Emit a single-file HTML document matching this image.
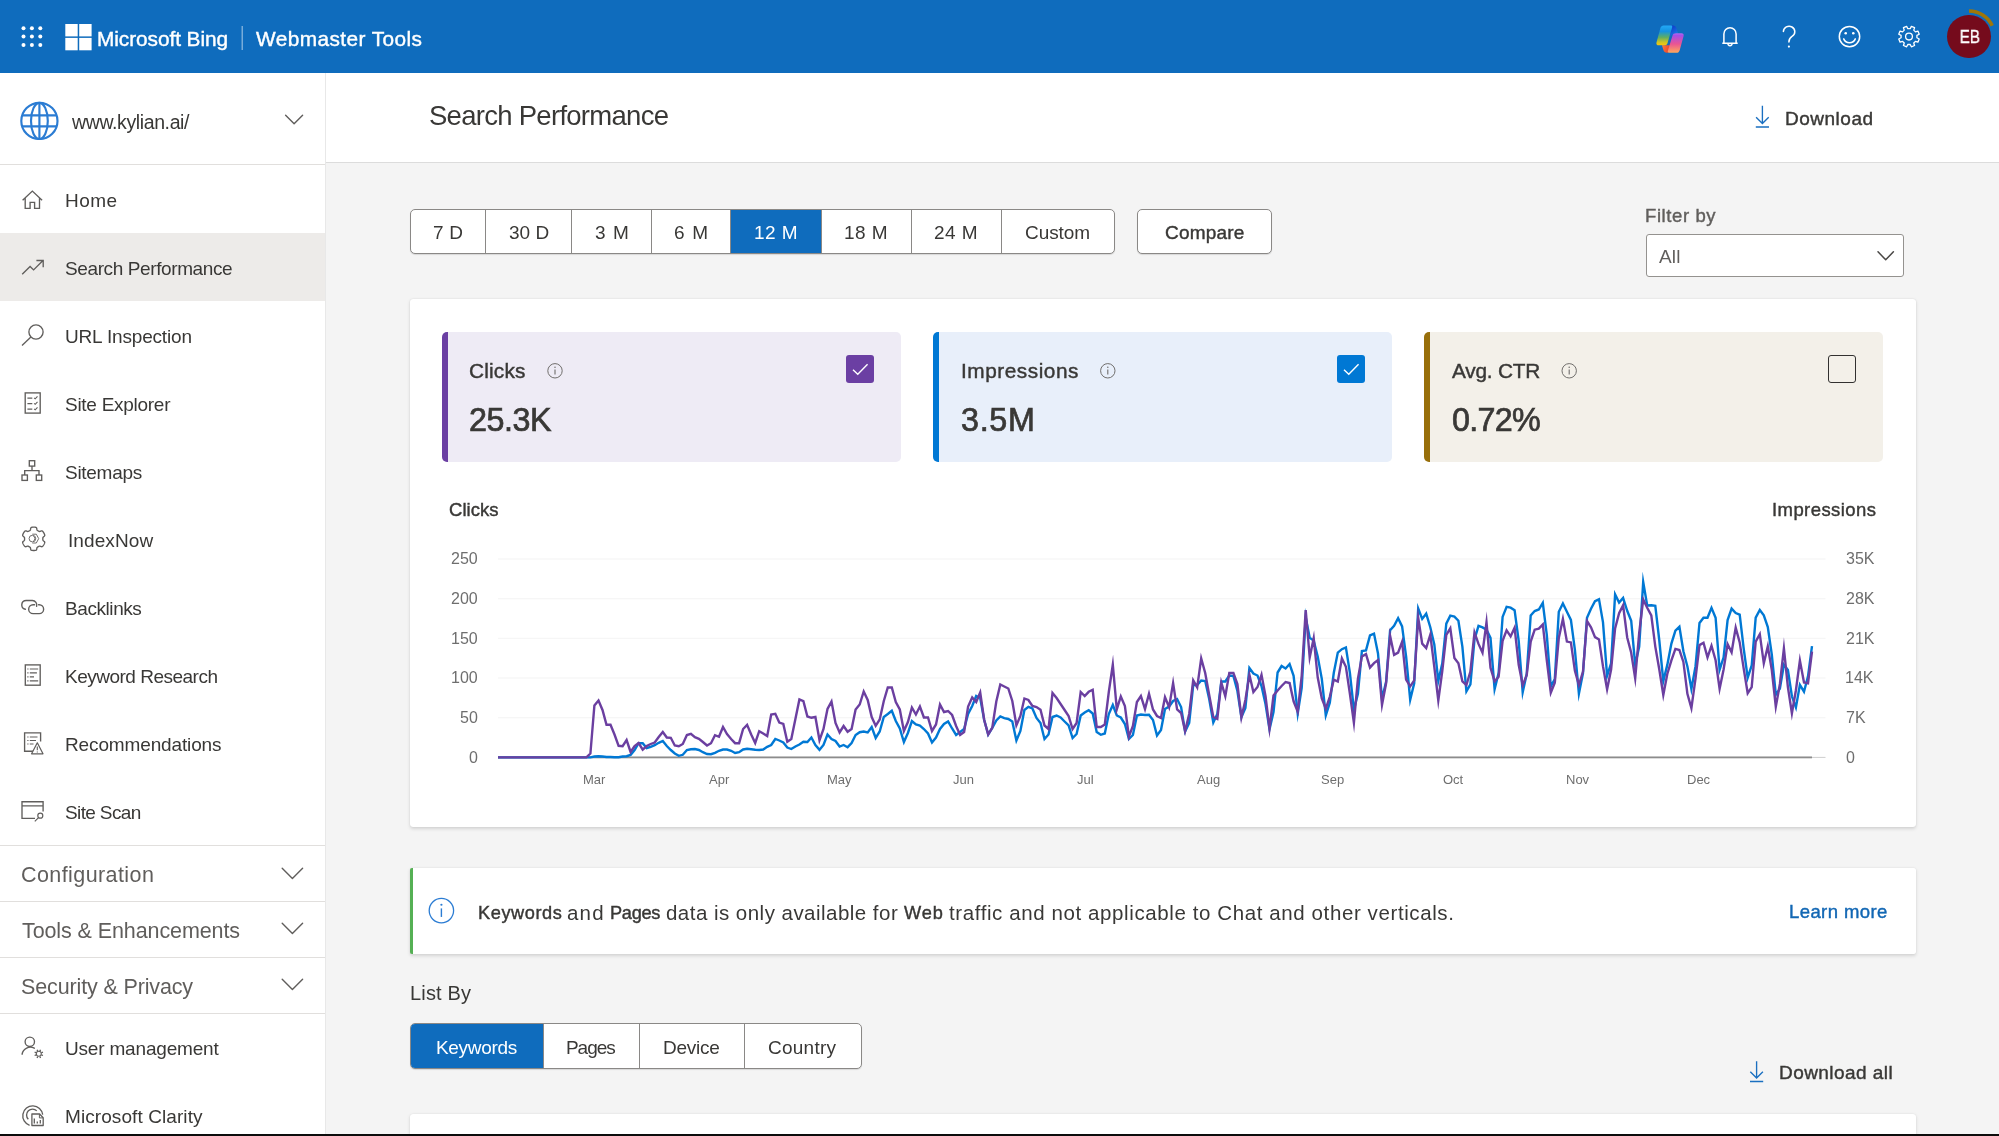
<!DOCTYPE html>
<html lang="en"><head><meta charset="utf-8"><title>Search Performance - Bing Webmaster Tools</title>
<style>
*{box-sizing:border-box;margin:0;padding:0}
html,body{width:1999px;height:1136px;overflow:hidden;background:#f4f4f4}
body{font-family:"Liberation Sans",sans-serif;position:relative;color:#323130}
.t{position:absolute;white-space:nowrap;display:block;will-change:transform}
.sb{-webkit-text-stroke:0.42px currentColor}
.sbM{-webkit-text-stroke:0.7px currentColor}
.sbL{-webkit-text-stroke:0.75px currentColor}
.abs{position:absolute}
header{position:absolute;left:0;top:0;width:1999px;height:73px;background:#0f6cbd}
aside{position:absolute;left:0;top:73px;width:326px;height:1063px;background:#fff;border-right:1px solid #e8e8e8}
.hr{position:absolute;left:0;width:325px;height:1px;background:#e1dfdd}
.titlebar{position:absolute;left:326px;top:73px;width:1673px;height:90px;background:#fff;border-bottom:1px solid #dcdcdc}
.card{position:absolute;background:#fff;border-radius:3px;box-shadow:0 1.6px 3.6px rgba(0,0,0,.13),0 0 1.2px rgba(0,0,0,.12)}
.seg{position:absolute;background:#fff;border:1px solid #8a8886;border-radius:5px;box-shadow:0 1px 1px rgba(0,0,0,.12)}
.seg i{position:absolute;top:0;width:1px;height:100%;background:#8a8886}
.seg b{position:absolute;top:0;height:100%;background:#0f6cbd}
.tile{position:absolute;top:332px;width:459px;height:130px;border-radius:5px;border-left:6px solid}
.cb{position:absolute;top:355px;width:28px;height:28px;border-radius:3px}
svg{position:absolute;overflow:visible}
</style></head><body>

<header>
<svg width="1999" height="73" style="left:0;top:0"><g fill="#fff"><circle cx="23.5" cy="28.2" r="2"/><circle cx="23.5" cy="36.6" r="2"/><circle cx="23.5" cy="45.0" r="2"/><circle cx="31.9" cy="28.2" r="2"/><circle cx="31.9" cy="36.6" r="2"/><circle cx="31.9" cy="45.0" r="2"/><circle cx="40.3" cy="28.2" r="2"/><circle cx="40.3" cy="36.6" r="2"/><circle cx="40.3" cy="45.0" r="2"/></g>
<g fill="#fff"><rect x="65.3" y="24" width="12.4" height="12.4"/><rect x="79.2" y="24" width="12.4" height="12.4"/><rect x="65.3" y="37.9" width="12.4" height="12.4"/><rect x="79.2" y="37.9" width="12.4" height="12.4"/></g>
<rect x="241.6" y="26" width="1.2" height="24" fill="#fff" opacity=".55"/>
<defs>
<linearGradient id="cpA" x1="0" y1="0" x2="0.6" y2="1"><stop offset="0" stop-color="#0a34c4"/><stop offset=".55" stop-color="#1557d6"/><stop offset="1" stop-color="#1a78e6"/></linearGradient>
<linearGradient id="cpB" x1="0" y1="0" x2="0" y2="1"><stop offset="0" stop-color="#23a9f7"/><stop offset=".3" stop-color="#1593e0"/><stop offset=".6" stop-color="#5fae62"/><stop offset=".85" stop-color="#cfc423"/><stop offset="1" stop-color="#f7c709"/></linearGradient>
<linearGradient id="cpC" x1="0" y1="0" x2="0" y2="1"><stop offset="0" stop-color="#b267f0"/><stop offset=".12" stop-color="#a84ee6"/><stop offset=".55" stop-color="#ea5592"/><stop offset="1" stop-color="#ffa95a"/></linearGradient>
<linearGradient id="cpD" x1="0" y1="0" x2="1" y2="0.3"><stop offset="0" stop-color="#ff7a3c"/><stop offset="1" stop-color="#e8432c"/></linearGradient>
</defs><path d="M1670.500 25.400 H1673.200 c1.600 0 2.700 .900 3.200 2.500 L1678.100 33.400 H1674.500 L1669.600 36 L1672.200 27.100z" fill="url(#cpA)"/><path d="M1661.900 45.200 H1670.600 L1668.300 52.800 H1666.700 c-1.600 0 -2.700 -.900 -3.200 -2.500z" fill="url(#cpD)"/><path d="M1663.6 25.400 H1671 c1 0 1.500 .700 1.200 1.700 L1667.400 43.600 c-.400 1.100 -1.200 1.700 -2.400 1.700 H1658.600 c-1.700 0 -2.600 -1.300 -2.100 -2.900 L1660.400 28 c.500 -1.700 1.600 -2.600 3.200 -2.600z" fill="url(#cpB)"/><path d="M1676 33.200 H1681.500 c1.700 0 2.600 1.300 2.100 2.900 L1679.700 50.200 c-.500 1.700 -1.600 2.600 -3.200 2.600 H1669 c-1 0 -1.500 -.700 -1.200 -1.700 L1672.600 35.200 c.400 -1.300 1.500 -2 3.400 -2z" fill="url(#cpC)"/><path d="M1722.3 43.300 H1737.700 M1723.900 43.300 V34 a6.100 6.400 0 0 1 12.200 0 V43.300" fill="none" stroke="#fff" stroke-width="1.5" stroke-linejoin="round"/><path d="M1727.900 43.600 a2.100 2.100 0 0 0 4.200 0" fill="none" stroke="#fff" stroke-width="1.4"/><path d="M1783.400 31.500 a5.700 5.400 0 1 1 8.600 4.800 c-2.200 1.500 -3.100 2.600 -3.100 5.600" fill="none" stroke="#fff" stroke-width="1.5" stroke-linecap="round"/><circle cx="1788.900" cy="46.600" r="1.100" fill="#fff"/><circle cx="1849.500" cy="36.600" r="10.200" fill="none" stroke="#fff" stroke-width="1.500"/><circle cx="1845.700" cy="33.300" r="1.300" fill="#fff"/><circle cx="1853.300" cy="33.300" r="1.300" fill="#fff"/><path d="M1843.700 38.900 a6.300 6.300 0 0 0 11.600 0" fill="none" stroke="#fff" stroke-width="1.500" stroke-linecap="round"/><path d="M1910.19 28.69 L1911.37 26.37 L1914.56 27.69 L1913.75 30.16 L1915.44 31.85 L1917.91 31.04 L1919.23 34.23 L1916.91 35.41 L1916.91 37.79 L1919.23 38.97 L1917.91 42.16 L1915.44 41.35 L1913.75 43.04 L1914.56 45.51 L1911.37 46.83 L1910.19 44.51 L1907.81 44.51 L1906.63 46.83 L1903.44 45.51 L1904.25 43.04 L1902.56 41.35 L1900.09 42.16 L1898.77 38.97 L1901.09 37.79 L1901.09 35.41 L1898.77 34.23 L1900.09 31.04 L1902.56 31.85 L1904.25 30.16 L1903.44 27.69 L1906.63 26.37 L1907.81 28.69Z" fill="none" stroke="#fff" stroke-width="1.300" stroke-linejoin="round"/><circle cx="1909" cy="36.600" r="3.400" fill="none" stroke="#fff" stroke-width="1.300"/><path d="M1969.00 11.00 A25.6 25.6 0 0 1 1992.20 25.78" fill="none" stroke="#9f7609" stroke-width="3.600"/>
</svg>
<span class="t sb" style="left:97.49px;top:25.29px;font-size:20.8px;line-height:27px;color:#fff;letter-spacing:-0.056px;">Microsoft Bing</span>
<span class="t sb" style="left:255.51px;top:25.29px;font-size:20.8px;line-height:27px;color:#fff;letter-spacing:0.437px;">Webmaster Tools</span>
<div class="abs" style="left:1947.2px;top:14.9px;width:43.4px;height:43.4px;border-radius:50%;background:#750b1c"></div>
<span class="t sb" style="left:1957.53px;top:26.33px;font-size:17.8px;line-height:23px;color:#fff;transform:scaleX(0.86);transform-origin:50% 50%;">EB</span>
</header>
<aside></aside>
<div class="abs" style="left:0;top:233px;width:325px;height:68px;background:#edebe9"></div>
<nav>
<span class="t" style="left:72.23px;top:109.94px;font-size:19.5px;line-height:25px;color:#393836;letter-spacing:-0.383px;">www.kylian.ai/</span>
<span class="t" style="left:64.94px;top:187.62px;font-size:19px;line-height:25px;color:#393836;letter-spacing:0.473px;">Home</span>
<span class="t" style="left:64.94px;top:255.62px;font-size:19px;line-height:25px;color:#393836;letter-spacing:-0.391px;">Search Performance</span>
<span class="t" style="left:64.73px;top:323.62px;font-size:19px;line-height:25px;color:#393836;letter-spacing:-0.169px;">URL Inspection</span>
<span class="t" style="left:64.74px;top:391.62px;font-size:19px;line-height:25px;color:#393836;letter-spacing:-0.274px;">Site Explorer</span>
<span class="t" style="left:64.74px;top:459.62px;font-size:19px;line-height:25px;color:#393836;letter-spacing:-0.279px;">Sitemaps</span>
<span class="t" style="left:67.65px;top:527.62px;font-size:19px;line-height:25px;color:#393836;letter-spacing:0.088px;">IndexNow</span>
<span class="t" style="left:65.14px;top:595.62px;font-size:19px;line-height:25px;color:#393836;letter-spacing:-0.426px;">Backlinks</span>
<span class="t" style="left:65.14px;top:663.62px;font-size:19px;line-height:25px;color:#393836;letter-spacing:-0.502px;">Keyword Research</span>
<span class="t" style="left:65.14px;top:731.62px;font-size:19px;line-height:25px;color:#393836;letter-spacing:-0.133px;">Recommendations</span>
<span class="t" style="left:65.24px;top:799.62px;font-size:19px;line-height:25px;color:#393836;letter-spacing:-0.629px;">Site Scan</span>
<span class="t" style="left:65.23px;top:1035.72px;font-size:19px;line-height:25px;color:#393836;letter-spacing:-0.185px;">User management</span>
<span class="t" style="left:65.14px;top:1103.92px;font-size:19px;line-height:25px;color:#393836;letter-spacing:0.082px;">Microsoft Clarity</span>
<span class="t" style="left:21.31px;top:861.15px;font-size:21.5px;line-height:28px;color:#605e5c;letter-spacing:0.417px;">Configuration</span>
<span class="t" style="left:21.72px;top:917.15px;font-size:21.5px;line-height:28px;color:#605e5c;letter-spacing:-0.097px;">Tools &amp; Enhancements</span>
<span class="t" style="left:21.22px;top:973.05px;font-size:21.5px;line-height:28px;color:#605e5c;letter-spacing:-0.136px;">Security &amp; Privacy</span>
<div class="hr" style="top:164px"></div>
<div class="hr" style="top:845px"></div>
<div class="hr" style="top:901px"></div>
<div class="hr" style="top:957px"></div>
<div class="hr" style="top:1013px"></div>
<svg width="326" height="1136" style="left:0;top:0"><g fill="none" stroke="#2b7cd3" stroke-width="2.150"><circle cx="39.400" cy="120.900" r="18.100"/><ellipse cx="39.400" cy="120.900" rx="8.400" ry="18.100"/><path d="M39.400 102.800 V139 M22.200 115.400 H56.600 M22.200 126.400 H56.600"/></g><path d="M285.6 115.2 L294.1 123.8 L302.6 115.2" fill="none" stroke="#605e5c" stroke-width="1.4" stroke-linecap="round" stroke-linejoin="round"/><path d="M22.600 200.300 L32.350 191.100 L42.100 200.300 M25.200 198.300 V208.300 H30.100 V202.300 H34.600 V208.300 H39.500 V198.300" fill="none" stroke="#605e5c" stroke-width="1.350" stroke-linejoin="miter"/><path d="M22.200 274.300 L30.100 266.400 L33.600 269.900 L43 260.500 M36.400 260.500 H43.200 V267.300" fill="none" stroke="#605e5c" stroke-width="1.350" stroke-linejoin="miter"/><circle cx="36" cy="332" r="7.100" fill="none" stroke="#605e5c" stroke-width="1.350" stroke-linejoin="miter"/><path d="M30.900 337.100 L22 345.400" fill="none" stroke="#605e5c" stroke-width="1.350" stroke-linejoin="miter"/><rect x="25.200" y="392.900" width="15" height="20.200" fill="none" stroke="#605e5c" stroke-width="1.350" stroke-linejoin="miter"/><path d="M27.400 398.1 H32.300 M34.100 397.8 l1.100 1 l2.300 -2.400" fill="none" stroke="#605e5c" stroke-width="1.100"/><path d="M27.400 403.6 H32.300 M34.100 403.3 l1.100 1 l2.300 -2.400" fill="none" stroke="#605e5c" stroke-width="1.100"/><path d="M27.400 409.1 H32.300 M34.100 408.8 l1.100 1 l2.300 -2.400" fill="none" stroke="#605e5c" stroke-width="1.100"/><rect x="29.300" y="460.700" width="5.400" height="5.400" fill="none" stroke="#605e5c" stroke-width="1.350" stroke-linejoin="miter"/><rect x="22" y="475" width="5.400" height="5.400" fill="none" stroke="#605e5c" stroke-width="1.350" stroke-linejoin="miter"/><rect x="36.300" y="475" width="5.400" height="5.400" fill="none" stroke="#605e5c" stroke-width="1.350" stroke-linejoin="miter"/><path d="M32 466.100 V470.600 M24.700 475 V470.600 H39 V475" fill="none" stroke="#605e5c" stroke-width="1.350" stroke-linejoin="miter"/><path d="M33.70 527.10 L34.11 527.11 L34.52 527.13 L34.92 527.17 L35.33 527.22 L35.73 527.31 L36.11 527.44 L36.46 527.72 L36.71 528.29 L36.84 529.13 L36.97 529.80 L37.18 530.18 L37.44 530.41 L37.71 530.58 L37.99 530.74 L38.26 530.89 L38.54 531.06 L38.82 531.22 L39.10 531.37 L39.42 531.48 L39.85 531.47 L40.51 531.24 L41.30 530.93 L41.92 530.86 L42.33 531.03 L42.64 531.30 L42.91 531.60 L43.16 531.93 L43.40 532.26 L43.62 532.60 L43.83 532.95 L44.03 533.31 L44.21 533.67 L44.38 534.04 L44.54 534.42 L44.67 534.81 L44.74 535.21 L44.68 535.65 L44.31 536.15 L43.65 536.69 L43.13 537.14 L42.90 537.51 L42.84 537.84 L42.83 538.16 L42.83 538.48 L42.83 538.80 L42.83 539.12 L42.83 539.44 L42.84 539.76 L42.90 540.09 L43.13 540.46 L43.65 540.91 L44.31 541.45 L44.68 541.95 L44.74 542.39 L44.67 542.79 L44.54 543.18 L44.38 543.56 L44.21 543.93 L44.03 544.29 L43.83 544.65 L43.62 545.00 L43.40 545.34 L43.16 545.67 L42.91 546.00 L42.64 546.30 L42.33 546.57 L41.92 546.74 L41.30 546.67 L40.51 546.36 L39.85 546.13 L39.42 546.12 L39.10 546.23 L38.82 546.38 L38.54 546.54 L38.26 546.71 L37.99 546.86 L37.71 547.02 L37.44 547.19 L37.18 547.42 L36.97 547.80 L36.84 548.47 L36.71 549.31 L36.46 549.88 L36.11 550.16 L35.73 550.29 L35.33 550.38 L34.92 550.43 L34.52 550.47 L34.11 550.49 L33.70 550.50 L33.29 550.49 L32.88 550.47 L32.48 550.43 L32.07 550.38 L31.67 550.29 L31.29 550.16 L30.94 549.88 L30.69 549.31 L30.56 548.47 L30.43 547.80 L30.22 547.42 L29.96 547.19 L29.69 547.02 L29.41 546.86 L29.14 546.71 L28.86 546.54 L28.58 546.38 L28.30 546.23 L27.98 546.12 L27.55 546.13 L26.89 546.36 L26.10 546.67 L25.48 546.74 L25.07 546.57 L24.76 546.30 L24.49 546.00 L24.24 545.67 L24.00 545.34 L23.78 545.00 L23.57 544.65 L23.37 544.29 L23.19 543.93 L23.02 543.56 L22.86 543.18 L22.73 542.79 L22.66 542.39 L22.72 541.95 L23.09 541.45 L23.75 540.91 L24.27 540.46 L24.50 540.09 L24.56 539.76 L24.57 539.44 L24.57 539.12 L24.57 538.80 L24.57 538.48 L24.57 538.16 L24.56 537.84 L24.50 537.51 L24.27 537.14 L23.75 536.69 L23.09 536.15 L22.72 535.65 L22.66 535.21 L22.73 534.81 L22.86 534.42 L23.02 534.04 L23.19 533.67 L23.37 533.31 L23.57 532.95 L23.78 532.60 L24.00 532.26 L24.24 531.93 L24.49 531.60 L24.76 531.30 L25.07 531.03 L25.48 530.86 L26.10 530.93 L26.89 531.24 L27.55 531.47 L27.98 531.48 L28.30 531.37 L28.58 531.22 L28.86 531.06 L29.14 530.89 L29.41 530.74 L29.69 530.58 L29.96 530.41 L30.22 530.18 L30.43 529.80 L30.56 529.13 L30.69 528.29 L30.94 527.72 L31.29 527.44 L31.67 527.31 L32.07 527.22 L32.48 527.17 L32.88 527.13 L33.29 527.11Z" fill="none" stroke="#605e5c" stroke-width="1.350" stroke-linejoin="round"/><circle cx="32.400" cy="538.600" r="3.300" fill="none" stroke="#605e5c" stroke-width=".9"/><path d="M32.300 534.200 H36.300 L38.700 538.600 L36.300 543 H32.300" fill="none" stroke="#605e5c" stroke-width=".9" stroke-linejoin="round"/><path d="M33.300 536.200 a2.600 2.600 0 0 1 0 4.800" fill="none" stroke="#605e5c" stroke-width=".9"/><path d="M25.300 609.300 A4.450 4.450 0 0 1 26.300 600.500 H32.300 A4.450 4.450 0 0 1 36.600 606.300" fill="none" stroke="#605e5c" stroke-width="1.400" stroke-linecap="round"/><path d="M38.600 604.700 H39.200 A4.450 4.450 0 0 1 39.200 613.600 H33.100 A4.450 4.450 0 0 1 33.100 604.700 H34.600" fill="none" stroke="#605e5c" stroke-width="1.400" stroke-linecap="round"/><rect x="25.300" y="664.900" width="14.900" height="20.300" fill="none" stroke="#605e5c" stroke-width="1.350" stroke-linejoin="miter"/><path d="M27.300 669 h1.200 M29.800 669 H38.2" fill="none" stroke="#605e5c" stroke-width="1.200"/><path d="M27.300 672.9 h1.200 M29.800 672.9 H36.9" fill="none" stroke="#605e5c" stroke-width="1.200"/><path d="M27.300 676.9 h1.200 M29.800 676.9 H34" fill="none" stroke="#605e5c" stroke-width="1.200"/><path d="M27.300 680.9 h1.200 M29.800 680.9 H38.2" fill="none" stroke="#605e5c" stroke-width="1.200"/><path d="M34 751.200 H24.600 V732.800 H40.600 V741.500" fill="none" stroke="#605e5c" stroke-width="1.350" stroke-linejoin="miter"/><path d="M27.300 737 h1.200 M29.800 737 H37.5" fill="none" stroke="#605e5c" stroke-width="1.100"/><path d="M27.300 740.5 h1.200 M29.800 740.5 H36" fill="none" stroke="#605e5c" stroke-width="1.100"/><path d="M27.300 744 h1.200 M29.800 744 H33.5" fill="none" stroke="#605e5c" stroke-width="1.100"/><path d="M37.300 742.800 L43 753.800 H31.600 Z" fill="#fff" stroke="#605e5c" stroke-width="1.200" stroke-linejoin="round"/><path d="M37.300 746.500 V750.300 M37.300 751.400 v1" stroke="#605e5c" stroke-width="1.100" fill="none"/><path d="M35 818.400 H22 V801.700 H43.100 V811.500 M22 805.900 H43.100" fill="none" stroke="#605e5c" stroke-width="1.350" stroke-linejoin="miter"/><circle cx="40.300" cy="815.700" r="2.500" fill="none" stroke="#605e5c" stroke-width="1.200"/><path d="M38.500 817.600 L34.800 821.300" stroke="#605e5c" stroke-width="1.200" fill="none"/><path d="M282.2 868.2 L292.4 878.4 L302.6 868.2" fill="none" stroke="#605e5c" stroke-width="1.4" stroke-linecap="round" stroke-linejoin="round"/><path d="M282.2 923.2 L292.4 933.4 L302.6 923.2" fill="none" stroke="#605e5c" stroke-width="1.4" stroke-linecap="round" stroke-linejoin="round"/><path d="M282.2 979.2 L292.4 989.4 L302.6 979.2" fill="none" stroke="#605e5c" stroke-width="1.4" stroke-linecap="round" stroke-linejoin="round"/><circle cx="29.800" cy="1041.800" r="4.700" fill="none" stroke="#605e5c" stroke-width="1.350" stroke-linejoin="miter"/><path d="M22.100 1054.200 A8.300 8.300 0 0 1 34.300 1048.200" fill="none" stroke="#605e5c" stroke-width="1.400" stroke-linecap="round"/><circle cx="38.800" cy="1053.800" r="2.500" fill="none" stroke="#605e5c" stroke-width="1.100"/><path d="M39.87 1051.21 L40.52 1049.64 M41.39 1052.73 L42.96 1052.08 M41.39 1054.87 L42.96 1055.52 M39.87 1056.39 L40.52 1057.96 M37.73 1056.39 L37.08 1057.96 M36.21 1054.87 L34.64 1055.52 M36.21 1052.73 L34.64 1052.08 M37.73 1051.21 L37.08 1049.64 " fill="none" stroke="#605e5c" stroke-width="1.300"/><path d="M29.600 1125.300 A10 10 0 1 1 42.700 1114.600" fill="none" stroke="#605e5c" stroke-width="1.350" stroke-linejoin="miter"/><path d="M28.300 1119.300 A5.900 5.900 0 0 1 36.800 1110.900" fill="none" stroke="#605e5c" stroke-width="1.350" stroke-linejoin="miter"/><path d="M31.900 1114 H39.600 L43.200 1117.700 V1125.500 H31.900 Z" fill="#fff" stroke="#605e5c" stroke-width="1.300" stroke-linejoin="round"/><path d="M39.400 1114.200 V1117.900 H43" fill="none" stroke="#605e5c" stroke-width="1"/><path d="M34.300 1123.600 v-5 M37.300 1123.600 v-2 M40.300 1123.600 v-3.500" stroke="#605e5c" stroke-width="1.300" fill="none"/></svg>
</nav>
<div class="titlebar"></div>
<span class="t" style="left:428.95px;top:97.77px;font-size:27.5px;line-height:36px;color:#393836;letter-spacing:-0.719px;">Search Performance</span>
<span class="t sb" style="left:1784.64px;top:105.72px;font-size:19px;line-height:25px;color:#393836;letter-spacing:0.512px;">Download</span>
<main>
<div class="seg" style="left:410px;top:208.5px;width:705px;height:45.5px"><b style="left:319.5px;width:90.5px"></b><i style="left:74.3px"></i><i style="left:160.3px"></i><i style="left:240.4px"></i><i style="left:319.4px"></i><i style="left:409.8px"></i><i style="left:500.0px"></i><i style="left:590.4px"></i></div>
<span class="t" style="left:432.93px;top:219.62px;font-size:19px;line-height:25px;color:#393836;letter-spacing:0.258px;">7 D</span>
<span class="t" style="left:508.78px;top:219.62px;font-size:19px;line-height:25px;color:#393836;">30 D</span>
<span class="t" style="left:594.98px;top:219.62px;font-size:19px;line-height:25px;color:#393836;letter-spacing:1.055px;">3 M</span>
<span class="t" style="left:673.64px;top:219.62px;font-size:19px;line-height:25px;color:#393836;letter-spacing:1.175px;">6 M</span>
<span class="t" style="left:754.15px;top:219.62px;font-size:19px;line-height:25px;color:#fff;letter-spacing:0.455px;">12 M</span>
<span class="t" style="left:844.25px;top:219.62px;font-size:19px;line-height:25px;color:#393836;letter-spacing:0.422px;">18 M</span>
<span class="t" style="left:934.14px;top:219.62px;font-size:19px;line-height:25px;color:#393836;letter-spacing:0.458px;">24 M</span>
<span class="t" style="left:1025.34px;top:219.62px;font-size:19px;line-height:25px;color:#393836;letter-spacing:-0.069px;">Custom</span>
<div class="seg" style="left:1137px;top:208.5px;width:135px;height:45.5px"></div>
<span class="t sb" style="left:1164.74px;top:219.62px;font-size:19px;line-height:25px;color:#393836;letter-spacing:0.211px;">Compare</span>
<span class="t sb" style="left:1645.48px;top:204.19px;font-size:18.5px;line-height:24px;color:#605e5c;letter-spacing:0.596px;">Filter by</span>
<div class="abs" style="left:1646px;top:234.2px;width:258px;height:42.6px;background:#fff;border:1px solid #94928f;border-radius:3px"></div>
<span class="t" style="left:1659.16px;top:244.12px;font-size:19px;line-height:25px;color:#605e5c;letter-spacing:0.196px;">All</span>
<div class="card" style="left:410px;top:299px;width:1506px;height:528px"></div>
<div class="tile" style="left:442px;border-color:#6b3fa3;background:#eeebf5"></div>
<div class="tile" style="left:933px;border-color:#0078d4;background:#e8effa"></div>
<div class="tile" style="left:1424px;border-color:#986f0b;background:#f3f0e9"></div>
<span class="t sb" style="left:469.14px;top:356.69px;font-size:20.8px;line-height:27px;color:#393836;letter-spacing:0.189px;">Clicks</span>
<span class="t sbM" style="left:468.98px;top:398.81px;font-size:32.3px;line-height:42px;color:#393836;letter-spacing:-0.456px;">25.3K</span>
<span class="t sb" style="left:960.88px;top:356.69px;font-size:20.8px;line-height:27px;color:#393836;letter-spacing:0.535px;">Impressions</span>
<span class="t sbM" style="left:961.27px;top:398.81px;font-size:32.3px;line-height:42px;color:#393836;letter-spacing:0.691px;">3.5M</span>
<span class="t sb" style="left:1452.26px;top:356.69px;font-size:20.8px;line-height:27px;color:#393836;letter-spacing:-0.224px;">Avg. CTR</span>
<span class="t sbM" style="left:1451.54px;top:398.81px;font-size:32.3px;line-height:42px;color:#393836;letter-spacing:-0.743px;">0.72%</span>
<div class="cb" style="left:846px;background:#6b3fa3"></div>
<div class="cb" style="left:1337px;background:#0078d4"></div>
<div class="cb" style="left:1828px;border:1.5px solid #323130"></div>
<span class="t sb" style="left:449.06px;top:497.59px;font-size:18.5px;line-height:24px;color:#393836;letter-spacing:0.055px;">Clicks</span>
<span class="t sb" style="left:1772.09px;top:497.59px;font-size:18.5px;line-height:24px;color:#393836;letter-spacing:0.425px;">Impressions</span>
<span class="t" style="left:451.43px;top:548.36px;font-size:16px;line-height:21px;color:#6e6e6e;">250</span>
<span class="t" style="left:451.43px;top:588.04px;font-size:16px;line-height:21px;color:#6e6e6e;">200</span>
<span class="t" style="left:451.43px;top:627.72px;font-size:16px;line-height:21px;color:#6e6e6e;">150</span>
<span class="t" style="left:451.43px;top:667.40px;font-size:16px;line-height:21px;color:#6e6e6e;">100</span>
<span class="t" style="left:460.33px;top:707.08px;font-size:16px;line-height:21px;color:#6e6e6e;">50</span>
<span class="t" style="left:469.23px;top:746.76px;font-size:16px;line-height:21px;color:#6e6e6e;">0</span>
<span class="t" style="left:1846.09px;top:548.36px;font-size:16px;line-height:21px;color:#6e6e6e;">35K</span>
<span class="t" style="left:1845.90px;top:588.04px;font-size:16px;line-height:21px;color:#6e6e6e;">28K</span>
<span class="t" style="left:1845.90px;top:627.72px;font-size:16px;line-height:21px;color:#6e6e6e;">21K</span>
<span class="t" style="left:1845.48px;top:667.40px;font-size:16px;line-height:21px;color:#6e6e6e;">14K</span>
<span class="t" style="left:1845.88px;top:707.08px;font-size:16px;line-height:21px;color:#6e6e6e;">7K</span>
<span class="t" style="left:1846.08px;top:746.76px;font-size:16px;line-height:21px;color:#6e6e6e;">0</span>
<span class="t" style="left:582.88px;top:771.00px;font-size:13px;line-height:17px;color:#6e6e6e;">Mar</span>
<span class="t" style="left:708.98px;top:771.00px;font-size:13px;line-height:17px;color:#6e6e6e;">Apr</span>
<span class="t" style="left:826.70px;top:771.00px;font-size:13px;line-height:17px;color:#6e6e6e;">May</span>
<span class="t" style="left:953.34px;top:771.00px;font-size:13px;line-height:17px;color:#6e6e6e;">Jun</span>
<span class="t" style="left:1076.52px;top:771.00px;font-size:13px;line-height:17px;color:#6e6e6e;">Jul</span>
<span class="t" style="left:1197.34px;top:771.00px;font-size:13px;line-height:17px;color:#6e6e6e;">Aug</span>
<span class="t" style="left:1321.41px;top:771.00px;font-size:13px;line-height:17px;color:#6e6e6e;">Sep</span>
<span class="t" style="left:1443.13px;top:771.00px;font-size:13px;line-height:17px;color:#6e6e6e;">Oct</span>
<span class="t" style="left:1565.93px;top:771.00px;font-size:13px;line-height:17px;color:#6e6e6e;">Nov</span>
<span class="t" style="left:1687.08px;top:771.00px;font-size:13px;line-height:17px;color:#6e6e6e;">Dec</span>
<svg width="1999" height="1136" style="left:0;top:0"><rect x="498" y="558.35" width="1327.5" height="1.3" fill="#f6f6f6"/><rect x="498" y="598.03" width="1327.5" height="1.3" fill="#f6f6f6"/><rect x="498" y="637.71" width="1327.5" height="1.3" fill="#f6f6f6"/><rect x="498" y="677.39" width="1327.5" height="1.3" fill="#f6f6f6"/><rect x="498" y="717.07" width="1327.5" height="1.3" fill="#f6f6f6"/><rect x="498" y="756.90" width="1327.5" height="1" fill="#cfcfcf"/><rect x="498" y="756.50" width="1314" height="1.8" fill="#8c8c8c"/><polyline points="498.0,757.4 502.0,757.4 506.0,757.4 510.1,757.4 514.1,757.4 518.1,757.4 522.1,757.4 526.1,757.4 530.1,757.4 534.2,757.4 538.2,757.4 542.2,757.4 546.2,757.4 550.2,757.4 554.3,757.4 558.3,757.4 562.3,757.4 566.3,757.4 570.3,757.4 574.3,757.4 578.4,757.4 582.4,757.4 586.4,757.4 590.4,757.4 594.4,756.5 598.5,756.2 602.5,756.5 606.5,757.0 610.5,757.0 614.5,757.2 618.6,757.2 622.6,756.5 626.6,756.2 630.6,755.0 634.6,750.0 638.6,743.2 642.7,743.2 646.7,748.0 650.7,746.8 654.7,745.2 658.7,742.8 662.8,741.0 666.8,746.0 670.8,750.0 674.8,753.5 678.8,755.8 682.8,754.8 686.9,750.0 690.9,749.2 694.9,749.0 698.9,750.0 702.9,752.2 707.0,754.0 711.0,754.2 715.0,752.8 719.0,750.8 723.0,749.5 727.0,749.5 731.1,750.8 735.1,753.0 739.1,752.2 743.1,749.5 747.1,748.8 751.2,749.2 755.2,749.8 759.2,750.0 763.2,749.5 767.2,746.8 771.2,745.0 775.3,739.0 779.3,740.5 783.3,742.5 787.3,747.5 791.3,749.0 795.4,746.5 799.4,744.5 803.4,741.8 807.4,742.0 811.4,737.5 815.4,745.0 819.5,749.8 823.5,745.0 827.5,734.5 831.5,739.0 835.5,741.0 839.6,746.5 843.6,745.0 847.6,747.2 851.6,743.0 855.6,735.0 859.7,732.2 863.7,731.5 867.7,732.5 871.7,727.0 875.7,738.0 879.7,731.5 883.8,717.0 887.8,714.0 891.8,710.8 895.8,721.0 899.8,728.5 903.9,742.0 907.9,733.0 911.9,721.0 915.9,724.5 919.9,725.5 923.9,729.0 928.0,733.5 932.0,742.5 936.0,737.5 940.0,729.0 944.0,724.0 948.1,721.5 952.1,728.5 956.1,735.0 960.1,732.0 964.1,729.0 968.1,714.0 972.2,706.0 976.2,696.0 980.2,698.0 984.2,720.0 988.2,734.5 992.3,728.0 996.3,720.5 1000.3,716.5 1004.3,718.2 1008.3,719.0 1012.3,721.5 1016.4,740.5 1020.4,731.0 1024.4,710.0 1028.4,706.8 1032.4,708.5 1036.5,718.0 1040.5,723.0 1044.5,739.0 1048.5,734.5 1052.5,717.0 1056.6,715.5 1060.6,717.5 1064.6,721.5 1068.6,725.5 1072.6,738.0 1076.6,734.0 1080.7,715.5 1084.7,712.5 1088.7,710.2 1092.7,713.5 1096.7,732.0 1100.8,734.8 1104.8,733.5 1108.8,714.0 1112.8,705.0 1116.8,715.5 1120.8,717.5 1124.9,724.0 1128.9,739.0 1132.9,735.0 1136.9,715.5 1140.9,714.5 1145.0,715.0 1149.0,714.8 1153.0,720.0 1157.0,735.5 1161.0,730.0 1165.0,709.0 1169.1,706.5 1173.1,701.0 1177.1,699.0 1181.1,707.0 1185.1,731.5 1189.2,723.0 1193.2,685.0 1197.2,685.0 1201.2,680.5 1205.2,681.0 1209.2,699.0 1213.3,722.5 1217.3,714.0 1221.3,681.5 1225.3,681.5 1229.3,675.5 1233.4,676.0 1237.4,691.0 1241.4,717.2 1245.4,708.0 1249.4,668.0 1253.4,673.5 1257.5,675.5 1261.5,686.0 1265.5,704.0 1269.5,729.3 1273.5,712.0 1277.6,672.5 1281.6,666.0 1285.6,668.5 1289.6,664.0 1293.6,675.8 1297.7,713.5 1301.7,687.8 1305.7,617.4 1309.7,637.7 1313.7,640.6 1317.7,656.4 1321.8,678.8 1325.8,715.4 1329.8,702.8 1333.8,672.8 1337.8,652.6 1341.9,649.2 1345.9,647.4 1349.9,672.8 1353.9,709.9 1357.9,693.8 1361.9,651.1 1366.0,650.4 1370.0,635.4 1374.0,633.6 1378.0,653.4 1382.0,698.8 1386.1,681.8 1390.1,630.2 1394.1,625.7 1398.1,618.2 1402.1,626.4 1406.1,656.4 1410.2,699.7 1414.2,683.3 1418.2,608.5 1422.2,618.9 1426.2,613.7 1430.3,627.2 1434.3,644.4 1438.3,681.0 1442.3,663.3 1446.3,623.7 1450.3,615.7 1454.4,616.6 1458.4,620.7 1462.4,646.9 1466.4,691.3 1470.4,684.3 1474.5,639.4 1478.5,625.9 1482.5,627.4 1486.5,629.7 1490.5,637.9 1494.6,689.3 1498.6,673.1 1502.6,616.9 1506.6,606.8 1510.6,607.7 1514.6,610.2 1518.7,640.9 1522.7,692.3 1526.7,673.8 1530.7,615.4 1534.7,611.0 1538.8,609.5 1542.8,602.8 1546.8,634.9 1550.8,686.5 1554.8,679.0 1558.8,611.7 1562.9,603.5 1566.9,611.7 1570.9,619.9 1574.9,649.9 1578.9,693.6 1583.0,673.1 1587.0,617.7 1591.0,608.7 1595.0,601.2 1599.0,599.3 1603.0,622.3 1607.1,675.8 1611.1,663.4 1615.1,594.4 1619.1,602.5 1623.1,597.9 1627.2,610.8 1631.2,620.7 1635.2,665.1 1639.2,646.6 1643.2,581.9 1647.2,605.5 1651.3,605.2 1655.3,605.8 1659.3,640.5 1663.3,681.1 1667.3,664.9 1671.4,643.6 1675.4,630.6 1679.4,626.8 1683.4,651.2 1687.4,666.4 1691.4,689.0 1695.5,666.4 1699.5,623.0 1703.5,617.7 1707.5,617.7 1711.5,607.8 1715.6,617.7 1719.6,669.8 1723.6,657.3 1727.6,620.0 1731.6,608.6 1735.7,613.1 1739.7,614.7 1743.7,648.6 1747.7,677.6 1751.7,665.5 1755.7,617.7 1759.8,610.0 1763.8,615.4 1767.8,627.0 1771.8,654.7 1775.8,694.7 1779.9,688.6 1783.9,664.7 1787.9,670.1 1791.9,696.3 1795.9,707.4 1799.9,684.8 1804.0,691.7 1808.0,676.3 1812.0,646.2" fill="none" stroke="#0078d4" stroke-width="2.4" stroke-linejoin="miter" stroke-miterlimit="10"/><polyline points="498.0,757.4 502.0,757.4 506.0,757.4 510.1,757.4 514.1,757.4 518.1,757.4 522.1,757.4 526.1,757.4 530.1,757.4 534.2,757.4 538.2,757.4 542.2,757.4 546.2,757.4 550.2,757.4 554.3,757.4 558.3,757.4 562.3,757.4 566.3,757.4 570.3,757.4 574.3,757.4 578.4,757.4 582.4,757.4 586.4,757.4 590.4,753.5 594.4,705.5 598.5,700.5 602.5,710.0 606.5,724.8 610.5,724.8 614.5,734.5 618.6,745.8 622.6,746.2 626.6,740.0 630.6,752.0 634.6,746.0 638.6,743.0 642.7,749.7 646.7,746.0 650.7,744.0 654.7,742.5 658.7,737.0 662.8,732.0 666.8,737.5 670.8,737.8 674.8,745.5 678.8,746.2 682.8,744.0 686.9,735.0 690.9,733.8 694.9,737.2 698.9,738.8 702.9,742.0 707.0,745.5 711.0,743.2 715.0,735.2 719.0,736.8 723.0,727.0 727.0,734.0 731.1,739.0 735.1,743.2 739.1,743.2 743.1,729.0 747.1,724.8 751.2,734.5 755.2,743.0 759.2,731.2 763.2,733.5 767.2,736.0 771.2,714.5 775.3,713.8 779.3,722.5 783.3,724.0 787.3,741.8 791.3,739.0 795.4,719.0 799.4,699.5 803.4,701.2 807.4,716.5 811.4,717.8 815.4,717.0 819.5,740.3 823.5,729.0 827.5,709.0 831.5,701.6 835.5,723.0 839.6,732.5 843.6,726.0 847.6,731.8 851.6,729.0 855.6,709.5 859.7,704.5 863.7,691.5 867.7,700.0 871.7,717.0 875.7,725.8 879.7,719.5 883.8,701.0 887.8,687.5 891.8,687.5 895.8,702.0 899.8,709.5 903.9,731.0 907.9,722.0 911.9,707.5 915.9,714.5 919.9,706.5 923.9,717.5 928.0,717.5 932.0,731.0 936.0,724.5 940.0,704.5 944.0,712.0 948.1,711.0 952.1,715.0 956.1,726.0 960.1,735.0 964.1,732.0 968.1,706.5 972.2,697.5 976.2,702.0 980.2,692.5 984.2,720.0 988.2,734.5 992.3,727.5 996.3,701.5 1000.3,684.5 1004.3,686.5 1008.3,688.5 1012.3,701.0 1016.4,725.3 1020.4,716.0 1024.4,698.5 1028.4,700.0 1032.4,706.0 1036.5,707.0 1040.5,709.8 1044.5,725.5 1048.5,729.0 1052.5,693.0 1056.6,698.0 1060.6,704.0 1064.6,710.0 1068.6,716.0 1072.6,729.0 1076.6,723.0 1080.7,692.0 1084.7,696.0 1088.7,691.8 1092.7,689.8 1096.7,727.0 1100.8,727.0 1104.8,724.5 1108.8,692.0 1112.8,664.7 1116.8,709.4 1120.8,696.5 1124.9,706.0 1128.9,736.6 1132.9,726.0 1136.9,702.0 1140.9,696.0 1145.0,709.1 1149.0,693.8 1153.0,709.5 1157.0,716.0 1161.0,718.0 1165.0,697.2 1169.1,707.1 1173.1,683.1 1177.1,709.5 1181.1,713.0 1185.1,731.1 1189.2,714.0 1193.2,680.3 1197.2,687.3 1201.2,658.4 1205.2,673.0 1209.2,695.0 1213.3,717.0 1217.3,719.0 1221.3,682.6 1225.3,696.2 1229.3,673.0 1233.4,673.0 1237.4,684.0 1241.4,717.5 1245.4,700.0 1249.4,674.7 1253.4,692.0 1257.5,687.0 1261.5,674.8 1265.5,696.0 1269.5,728.6 1273.5,695.5 1277.6,690.5 1281.6,686.0 1285.6,682.0 1289.6,683.0 1293.6,701.3 1297.7,711.6 1301.7,675.8 1305.7,610.0 1309.7,657.5 1313.7,638.2 1317.7,677.3 1321.8,698.3 1325.8,708.7 1329.8,696.8 1333.8,679.6 1337.8,681.5 1341.9,658.4 1345.9,666.8 1349.9,693.8 1353.9,722.7 1357.9,678.8 1361.9,656.4 1366.0,654.1 1370.0,667.6 1374.0,663.1 1378.0,660.1 1382.0,704.9 1386.1,683.3 1390.1,635.7 1394.1,654.9 1398.1,652.6 1402.1,641.7 1406.1,679.6 1410.2,686.3 1414.2,680.3 1418.2,617.6 1422.2,643.6 1426.2,648.1 1430.3,634.7 1434.3,666.8 1438.3,700.5 1442.3,670.8 1446.3,634.9 1450.3,628.3 1454.4,658.1 1458.4,663.3 1462.4,681.3 1466.4,685.0 1470.4,671.6 1474.5,632.4 1478.5,643.9 1482.5,652.7 1486.5,622.2 1490.5,667.8 1494.6,681.3 1498.6,676.8 1502.6,640.9 1506.6,630.4 1510.6,636.4 1514.6,627.7 1518.7,664.8 1522.7,685.1 1526.7,675.3 1530.7,641.6 1534.7,629.7 1538.8,628.6 1542.8,624.4 1546.8,660.3 1550.8,692.7 1554.8,682.8 1558.8,637.9 1562.9,619.0 1566.9,641.6 1570.9,642.4 1574.9,670.8 1578.9,685.0 1583.0,671.6 1587.0,621.0 1591.0,627.4 1595.0,637.1 1599.0,639.4 1603.0,666.4 1607.1,689.3 1611.1,669.5 1615.1,628.4 1619.1,613.1 1623.1,605.3 1627.2,637.5 1631.2,652.7 1635.2,678.3 1639.2,632.9 1643.2,599.5 1647.2,607.8 1651.3,615.4 1655.3,646.6 1659.3,669.5 1663.3,694.9 1667.3,674.0 1671.4,660.3 1675.4,648.9 1679.4,650.0 1683.4,661.9 1687.4,693.8 1691.4,708.2 1695.5,678.6 1699.5,645.1 1703.5,642.8 1707.5,657.4 1711.5,645.7 1715.6,660.3 1719.6,688.8 1723.6,669.5 1727.6,644.1 1731.6,652.3 1735.7,627.6 1739.7,642.4 1743.7,668.6 1747.7,693.2 1751.7,687.1 1755.7,641.6 1759.8,634.2 1763.8,663.3 1767.8,646.4 1771.8,670.1 1775.8,706.7 1779.9,684.0 1783.9,648.4 1787.9,687.1 1791.9,713.2 1795.9,690.2 1799.9,660.5 1804.0,682.4 1808.0,683.2 1812.0,651.6" fill="none" stroke="#6b3fa0" stroke-width="2.4" stroke-linejoin="miter" stroke-miterlimit="10"/></svg>
<div class="card" style="left:410px;top:867.6px;width:1506px;height:86.8px;border-left:3px solid #55b054;border-radius:2px"></div>
<span class="t sb" style="left:477.51px;top:900.89px;font-size:18.2px;line-height:24px;color:#393836;letter-spacing:0.577px;">Keywords</span>
<span class="t" style="left:567.13px;top:898.60px;font-size:20.5px;line-height:27px;color:#393836;letter-spacing:1.194px;">and</span>
<span class="t sb" style="left:609.61px;top:900.89px;font-size:18.2px;line-height:24px;color:#393836;letter-spacing:-0.289px;">Pages</span>
<span class="t" style="left:665.74px;top:898.60px;font-size:20.5px;line-height:27px;color:#393836;letter-spacing:0.471px;">data is only available for</span>
<span class="t sb" style="left:904.32px;top:900.89px;font-size:18.2px;line-height:24px;color:#393836;letter-spacing:0.875px;">Web</span>
<span class="t" style="left:949.39px;top:898.60px;font-size:20.5px;line-height:27px;color:#393836;letter-spacing:0.599px;">traffic and not applicable to Chat and other verticals.</span>
<span class="t sb" style="left:1788.68px;top:900.49px;font-size:18.5px;line-height:24px;color:#1267b4;letter-spacing:0.404px;">Learn more</span>
<span class="t" style="left:410.16px;top:979.57px;font-size:20px;line-height:26px;color:#393836;letter-spacing:0.177px;">List By</span>
<div class="seg" style="left:410px;top:1023.4px;width:452px;height:45.8px"><b style="left:0;width:132px;border-radius:4px 0 0 4px"></b><i style="left:131.6px"></i><i style="left:228.2px"></i><i style="left:333.2px"></i></div>
<span class="t" style="left:435.94px;top:1035.02px;font-size:19px;line-height:25px;color:#fff;letter-spacing:-0.325px;">Keywords</span>
<span class="t" style="left:566.24px;top:1035.02px;font-size:19px;line-height:25px;color:#393836;letter-spacing:-1.057px;">Pages</span>
<span class="t" style="left:663.14px;top:1035.02px;font-size:19px;line-height:25px;color:#393836;letter-spacing:-0.275px;">Device</span>
<span class="t" style="left:768.14px;top:1035.02px;font-size:19px;line-height:25px;color:#393836;letter-spacing:0.246px;">Country</span>
<span class="t sb" style="left:1779.04px;top:1060.12px;font-size:19px;line-height:25px;color:#393836;letter-spacing:0.449px;">Download all</span>
<div class="card" style="left:410px;top:1114px;width:1506px;height:60px"></div>
<svg width="1999" height="1136" style="left:0;top:0"><path d="M1762.4 105.8 V123.5 M1756.1 117.20 L1762.4 123.5 L1768.7 117.20 M1755.8 127.0 H1769" fill="none" stroke="#1a6fc0" stroke-width="1.35" stroke-linejoin="miter"/><path d="M1756.6 1061.3 V1078.0 M1750.3 1071.70 L1756.6 1078.0 L1762.9 1071.70 M1750 1081.5 H1763.2" fill="none" stroke="#1a6fc0" stroke-width="1.35" stroke-linejoin="miter"/><circle cx="555" cy="370.8" r="7.2" fill="none" stroke="#6f6d6b" stroke-width="1.0"/><path d="M555 369.50 V374.54" stroke="#6f6d6b" stroke-width="1.1" fill="none"/><circle cx="555" cy="367.34" r="0.75" fill="#6f6d6b"/><circle cx="1107.8" cy="370.8" r="7.2" fill="none" stroke="#6f6d6b" stroke-width="1.0"/><path d="M1107.8 369.50 V374.54" stroke="#6f6d6b" stroke-width="1.1" fill="none"/><circle cx="1107.8" cy="367.34" r="0.75" fill="#6f6d6b"/><circle cx="1569.2" cy="370.8" r="7.2" fill="none" stroke="#6f6d6b" stroke-width="1.0"/><path d="M1569.2 369.50 V374.54" stroke="#6f6d6b" stroke-width="1.1" fill="none"/><circle cx="1569.2" cy="367.34" r="0.75" fill="#6f6d6b"/><circle cx="441.4" cy="910.6" r="12.2" fill="none" stroke="#2b7cd3" stroke-width="1.3"/><path d="M441.4 908.40 V916.94" stroke="#2b7cd3" stroke-width="1.4000000000000001" fill="none"/><circle cx="441.4" cy="904.74" r="1.10" fill="#2b7cd3"/><path d="M853.00 369.84 L857.76 374.32 L867.56 364.24" fill="none" stroke="#fff" stroke-width="1.4"/><path d="M1344.00 369.84 L1348.76 374.32 L1358.56 364.24" fill="none" stroke="#fff" stroke-width="1.4"/><path d="M1878 251.8 L1885.7 259.8 L1893.4 251.8" fill="none" stroke="#4a4846" stroke-width="1.5" stroke-linecap="round" stroke-linejoin="round"/></svg>
</main>
<div class="abs" style="left:0;top:1134.4px;width:1999px;height:1.6px;background:#0c0c0c"></div>
</body></html>
